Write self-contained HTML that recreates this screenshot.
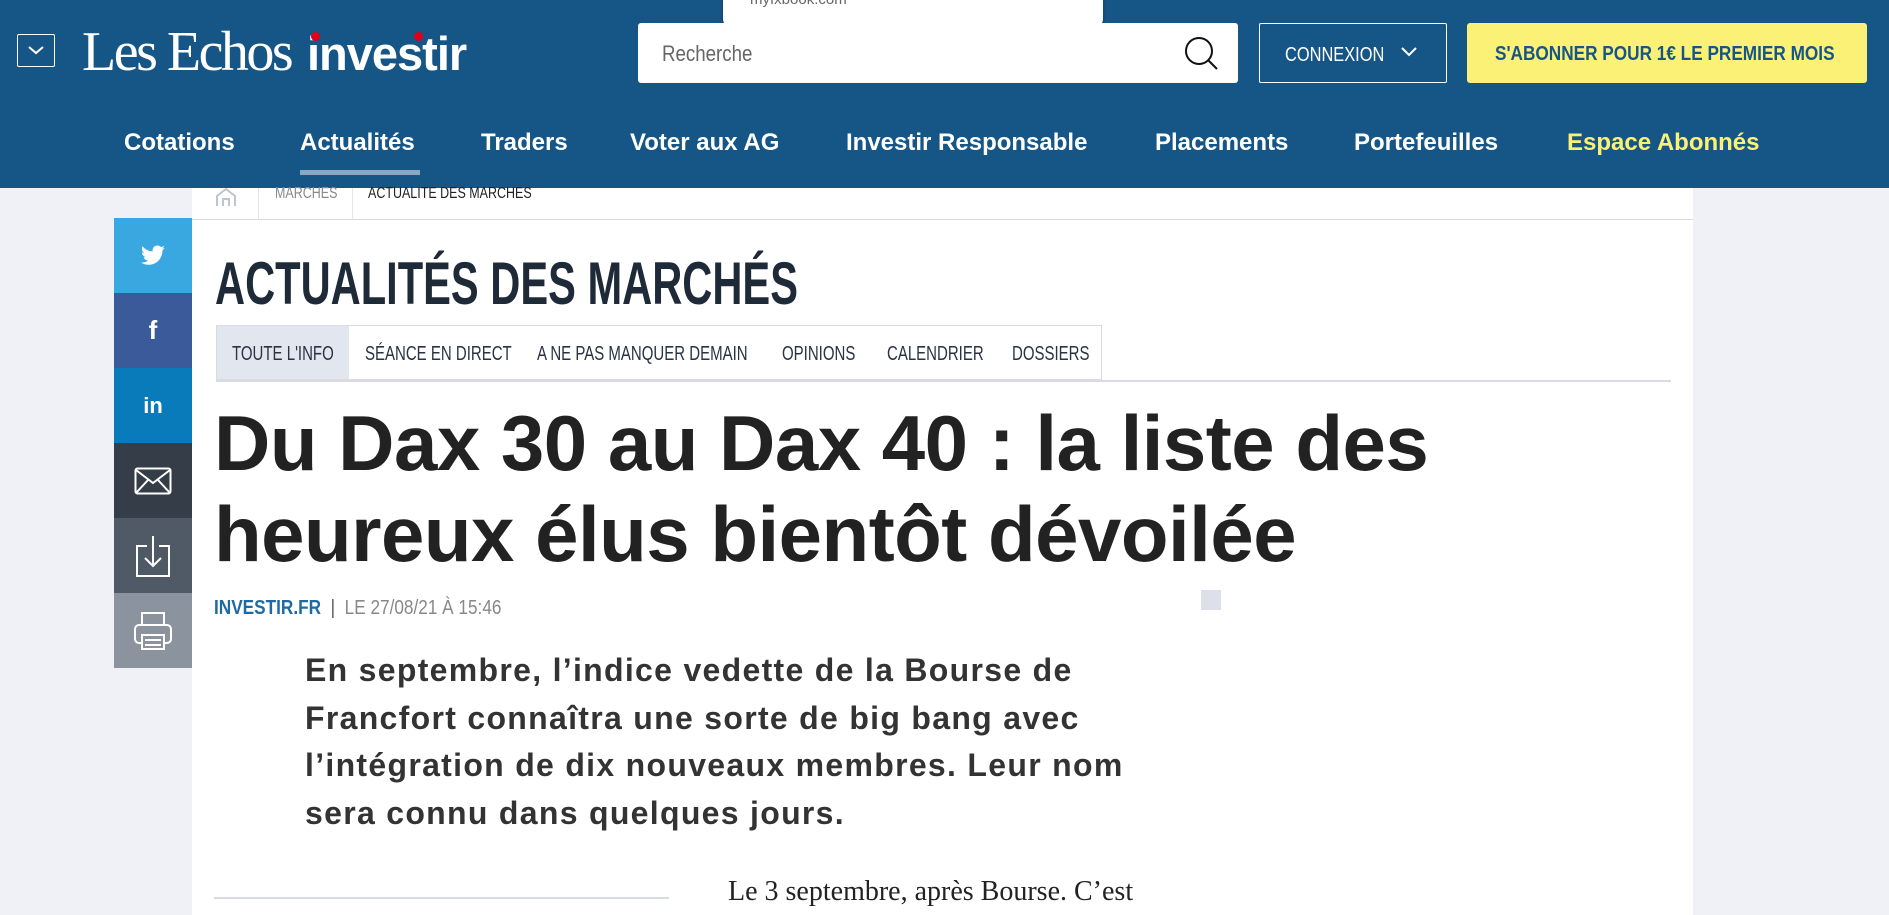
<!DOCTYPE html>
<html><head><meta charset="utf-8"><style>
*{margin:0;padding:0;box-sizing:border-box}
html,body{width:1889px;height:915px;overflow:hidden}
body{background:#f0f1f6;font-family:"Liberation Sans",sans-serif;position:relative}
.a{position:absolute}
.c{transform-origin:0 0;white-space:nowrap}
.hdr{left:0;top:0;width:1889px;height:188px;background:#165686}
.nav{top:129px;color:#fff;font-weight:bold;font-size:24px;white-space:nowrap}
.soc{left:114px;width:78px;height:75px;display:flex;align-items:center;justify-content:center}
.tab{top:343px;font-size:20px;color:#283444;transform:scaleX(.75)}
</style></head><body>
<div class="a hdr"></div>
<div class="a" style="left:17px;top:34px;width:38px;height:33px;border:1.5px solid #fff;border-radius:2px"></div>
<svg class="a" style="left:26px;top:44px" width="20" height="12"><path d="M3 3 L10 9 L17 3" stroke="#fff" stroke-width="2" fill="none"/></svg>
<div class="a c" style="left:82px;top:20px;color:#fff;font-family:'Liberation Serif',serif;font-size:56px;letter-spacing:-2.5px;transform:scaleX(1)">Les Echos</div>
<div class="a" style="left:307px;top:26px;color:#fff;font-weight:bold;font-size:47px;letter-spacing:-1px;white-space:nowrap">investir</div>
<div class="a" style="left:311px;top:32px;width:9px;height:9px;border-radius:50%;background:#e1001a"></div>
<div class="a" style="left:414px;top:32px;width:9px;height:9px;border-radius:50%;background:#e1001a"></div>
<div class="a" style="left:723px;top:-10px;width:380px;height:37px;background:#fff;border-radius:8px;box-shadow:0 2px 4px rgba(0,0,0,.3)"></div>
<div class="a" style="left:750px;top:-9px;font-size:15px;color:#666">myfxbook.com</div>
<div class="a" style="left:638px;top:23px;width:600px;height:60px;background:#fff;border-radius:3px"></div>
<div class="a c" style="left:662px;top:41px;font-size:22px;color:#666;transform:scaleX(.85)">Recherche</div>
<svg class="a" style="left:1183px;top:35px" width="38" height="38"><circle cx="16" cy="16" r="13" stroke="#111" stroke-width="2" fill="none"/><path d="M25 25 L34 34" stroke="#111" stroke-width="2"/></svg>
<div class="a" style="left:1259px;top:23px;width:188px;height:60px;border:1.5px solid #fff;border-radius:2px"></div>
<div class="a c" style="left:1285px;top:44px;font-size:20px;color:#fff;transform:scaleX(.82)">CONNEXION</div>
<svg class="a" style="left:1400px;top:46px" width="18" height="12"><path d="M2 2 L9 9 L16 2" stroke="#fff" stroke-width="2" fill="none"/></svg>
<div class="a" style="left:1467px;top:23px;width:400px;height:60px;background:#fbf176;border-radius:3px"></div>
<div class="a c" style="left:1495px;top:43px;color:#165686;font-weight:bold;font-size:20px;transform:scaleX(.86)">S'ABONNER POUR 1€ LE PREMIER MOIS</div>
<div class="a nav" style="left:124px">Cotations</div>
<div class="a nav" style="left:300px">Actualités</div>
<div class="a" style="left:300px;top:170px;width:120px;height:5px;background:#8aa8c3"></div>
<div class="a nav" style="left:481px">Traders</div>
<div class="a nav" style="left:630px">Voter aux AG</div>
<div class="a nav" style="left:846px">Investir Responsable</div>
<div class="a nav" style="left:1155px">Placements</div>
<div class="a nav" style="left:1354px">Portefeuilles</div>
<div class="a nav" style="left:1567px;color:#fbf176">Espace Abonnés</div>

<div class="a" style="left:192px;top:188px;width:1501px;height:727px;background:#fff"></div>
<div class="a" style="left:192px;top:219px;width:1501px;height:1px;background:#d8dbe4"></div>
<div class="a" style="left:258px;top:188px;width:1px;height:31px;background:#e4e6ec"></div>
<div class="a" style="left:352px;top:188px;width:1px;height:31px;background:#e4e6ec"></div>
<svg class="a" style="left:214px;top:188px" width="24" height="18"><path d="M3 18 V8 L12 1 L21 8 V18 M9 18 V11 H15 V18" stroke="#c0c4cc" stroke-width="2" fill="none"/></svg>
<div class="a c" style="left:275px;top:185px;font-size:16px;color:#888;transform:scaleX(.78)">MARCHES</div>
<div class="a c" style="left:368px;top:185px;font-size:16px;color:#222;transform:scaleX(.78)">ACTUALITE DES MARCHES</div>

<div class="a soc" style="top:218px;background:#3aa8e0"><svg width="26" height="22" viewBox="0 0 24 20"><path d="M23 2.5c-.8.4-1.7.6-2.6.7.9-.6 1.6-1.4 2-2.5-.9.5-1.9.9-2.9 1.1C18.6.9 17.4.3 16.1.3c-2.5 0-4.5 2-4.5 4.5 0 .4 0 .7.1 1C7.9 5.6 4.6 3.8 2.4 1.1c-.4.7-.6 1.4-.6 2.3 0 1.6.8 2.9 2 3.8-.7 0-1.4-.2-2-.6 0 2.2 1.6 4 3.6 4.4-.7.2-1.4.2-2 .1.6 1.8 2.2 3.1 4.2 3.1-1.5 1.2-3.5 1.9-5.6 1.9H1c2 1.3 4.4 2 6.9 2 8.3 0 12.8-6.9 12.8-12.8v-.6c.9-.6 1.6-1.4 2.3-2.2z" fill="#fff"/></svg></div>
<div class="a soc" style="top:293px;background:#3b5a9a;color:#fff;font-weight:bold;font-size:26px">f</div>
<div class="a soc" style="top:368px;background:#0a7bba;color:#fff;font-weight:bold;font-size:22px">in</div>
<div class="a soc" style="top:443px;background:#353d48"><svg width="38" height="28"><rect x="1.5" y="1.5" width="35" height="25" rx="2" stroke="#fff" stroke-width="2" fill="none"/><path d="M2 3 L19 16 L36 3 M2 26 L14 13 M36 26 L24 13" stroke="#fff" stroke-width="2" fill="none"/></svg></div>
<div class="a soc" style="top:518px;background:#4f5a66"><svg width="36" height="44"><path d="M12 12 H2 V42 H34 V12 H24 M18 2 V32 M10 24 L18 32 L26 24" stroke="#fff" stroke-width="2" fill="none"/></svg></div>
<div class="a soc" style="top:593px;background:#8b939e"><svg width="40" height="40"><rect x="9" y="2" width="22" height="12" stroke="#fff" stroke-width="2" fill="none"/><rect x="2" y="14" width="36" height="18" rx="4" stroke="#fff" stroke-width="2" fill="none"/><rect x="9" y="24" width="22" height="14" stroke="#fff" stroke-width="2" fill="#8b939e"/><path d="M12 29H28M12 34H28" stroke="#fff" stroke-width="2"/></svg></div>

<div class="a c" style="left:215px;top:249px;font-size:60px;font-weight:bold;color:#1f2a38;transform:scaleX(.694)">ACTUALITÉS DES MARCHÉS</div>
<div class="a" style="left:216px;top:325px;width:886px;height:55px;border:1.5px solid #d8dbe4"></div>
<div class="a" style="left:217px;top:326px;width:132px;height:53px;background:#e2e6ef"></div>
<div class="a" style="left:216px;top:380px;width:1455px;height:1.5px;background:#d8dbe4"></div>
<div class="a c tab" style="left:232px">TOUTE L'INFO</div>
<div class="a c tab" style="left:365px">SÉANCE EN DIRECT</div>
<div class="a c tab" style="left:537px">A NE PAS MANQUER DEMAIN</div>
<div class="a c tab" style="left:782px">OPINIONS</div>
<div class="a c tab" style="left:887px">CALENDRIER</div>
<div class="a c tab" style="left:1012px">DOSSIERS</div>

<div class="a" style="left:214px;top:398px;font-size:78px;font-weight:bold;color:#222;line-height:91px;letter-spacing:-0.5px;white-space:nowrap">Du Dax 30 au Dax 40 : la liste des<br>heureux élus bientôt dévoilée</div>
<div class="a c" style="left:214px;top:597px;font-size:20px;transform:scaleX(.86)"><span style="color:#1f6aa0;font-weight:bold">INVESTIR.FR</span> <span style="color:#555">&nbsp;|&nbsp;</span> <span style="color:#888">LE 27/08/21 À 15:46</span></div>
<div class="a" style="left:1201px;top:590px;width:20px;height:20px;background:#dde0e8"></div>
<div class="a" style="left:305px;top:647px;font-size:32px;font-weight:bold;color:#333;line-height:47.5px;white-space:nowrap;letter-spacing:1.3px">En septembre, l’indice vedette de la Bourse de<br>Francfort connaîtra une sorte de big bang avec<br>l’intégration de dix nouveaux membres. Leur nom<br>sera connu dans quelques jours.</div>
<div class="a" style="left:214px;top:897px;width:455px;height:1.5px;background:#d8dbe4"></div>
<div class="a c" style="left:728px;top:872px;font-family:'Liberation Serif',serif;font-size:28px;color:#222;line-height:40px;transform:scaleX(1)">Le 3 septembre, après Bourse. C’est<br>la date à laquelle les nouveaux</div>
</body></html>
